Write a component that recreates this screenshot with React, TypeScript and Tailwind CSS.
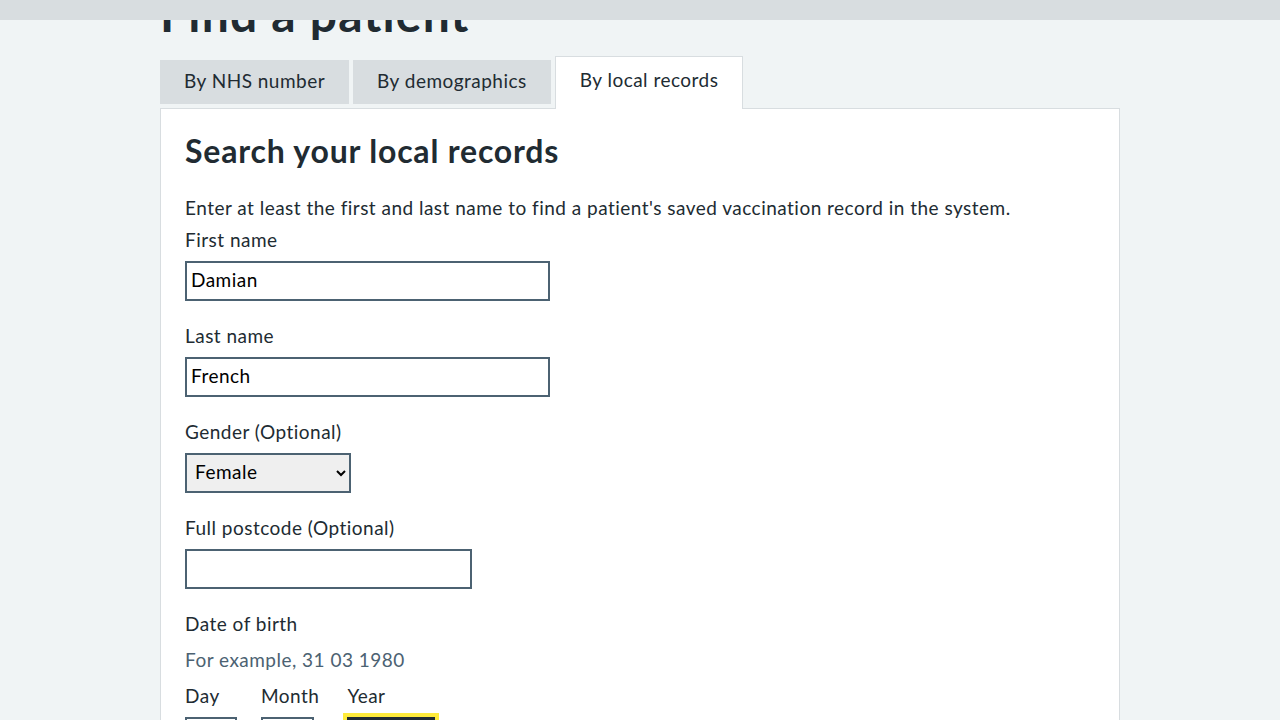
import { FC } from "react";

const Field: FC<{ label: string; children: React.ReactNode }> = ({ label, children }) => {
  return (
    <div className="mb-6">
      <label className="block text-[19px] leading-[22px] mb-[10px]">{label}</label>
      {children}
    </div>
  );
};

const inputCls =
  "block h-10 border-2 border-solid border-[#4c6272] bg-white px-1 pb-[3px] text-[19px] text-black outline-none";

export default function App() {
  return (
    <div
      className="min-h-screen bg-[#f0f4f5] text-[#212b32] tracking-[0.03em]"
      style={{ fontFamily: "Lato, 'Noto Sans', sans-serif" }}
    >
      <div className="fixed top-0 left-0 right-0 h-5 bg-[#d8dde0] z-20" />

      <main className="w-[960px] mx-auto pb-10">
        <h1 className="-mt-[14px] text-[48px] leading-[56px] font-bold tracking-[0.025em]">
          Find a patient
        </h1>

        <div className="mt-[14px] flex items-start gap-1 relative z-10 -mb-px">
          <button
            type="button"
            className="mt-1 h-11 px-6 pb-1 bg-[#d8dde0] text-[19px] leading-none"
          >
            By NHS number
          </button>
          <button
            type="button"
            className="mt-1 h-11 px-6 pb-1 bg-[#d8dde0] text-[19px] leading-none"
          >
            By demographics
          </button>
          <button
            type="button"
            className="h-[53px] px-6 pb-[7px] bg-white border border-b-0 border-solid border-[#d8dde0] text-[19px] leading-none"
          >
            By local records
          </button>
        </div>

        <section className="bg-white border border-solid border-[#d8dde0] px-6 pt-6 pb-10">
          <h2 className="text-[32px] leading-[35px] font-bold mb-[29px] tracking-[0.025em]">
            Search your local records
          </h2>
          <p className="text-[19px] leading-[22px] mb-[10px]">
            Enter at least the first and last name to find a patient's saved vaccination record in
            the system.
          </p>

          <Field label="First name">
            <input className={`${inputCls} w-[365px]`} defaultValue="Damian" />
          </Field>

          <Field label="Last name">
            <input className={`${inputCls} w-[365px]`} defaultValue="French" />
          </Field>

          <Field label="Gender (Optional)">
            <select
              className="block h-10 w-[166px] border-2 border-solid border-[#4c6272] bg-[#efefef] pl-1 pb-[3px] text-[19px] text-black outline-none"
              defaultValue="female"
            >
              <option value="">Select</option>
              <option value="female">Female</option>
              <option value="male">Male</option>
            </select>
          </Field>

          <Field label="Full postcode (Optional)">
            <input className={`${inputCls} w-[287px]`} defaultValue="" />
          </Field>

          <fieldset>
            <legend className="text-[19px] leading-[22px] mb-[14px]">Date of birth</legend>
            <div className="text-[19px] leading-[22px] text-[#4c6272] mb-[14px]">
              For example, 31 03 1980
            </div>
            <div className="flex items-start gap-6">
              <div>
                <label className="block text-[19px] leading-[22px] mb-[10px]">Day</label>
                <input className={`${inputCls} w-[52px]`} />
              </div>
              <div>
                <label className="block text-[19px] leading-[22px] mb-[10px]">Month</label>
                <input className={`${inputCls} w-[53px]`} />
              </div>
              <div className="pl-1">
                <label className="block text-[19px] leading-[22px] mb-[10px]">Year</label>
                <input className="block h-10 w-[88px] border-4 border-solid border-[#212b32] bg-white px-1 text-[19px] text-black outline-4 outline-solid outline-[#ffeb3b] shadow-[inset_0_0_0_2px_#212b32]" />
              </div>
            </div>
          </fieldset>
        </section>
      </main>
    </div>
  );
}
